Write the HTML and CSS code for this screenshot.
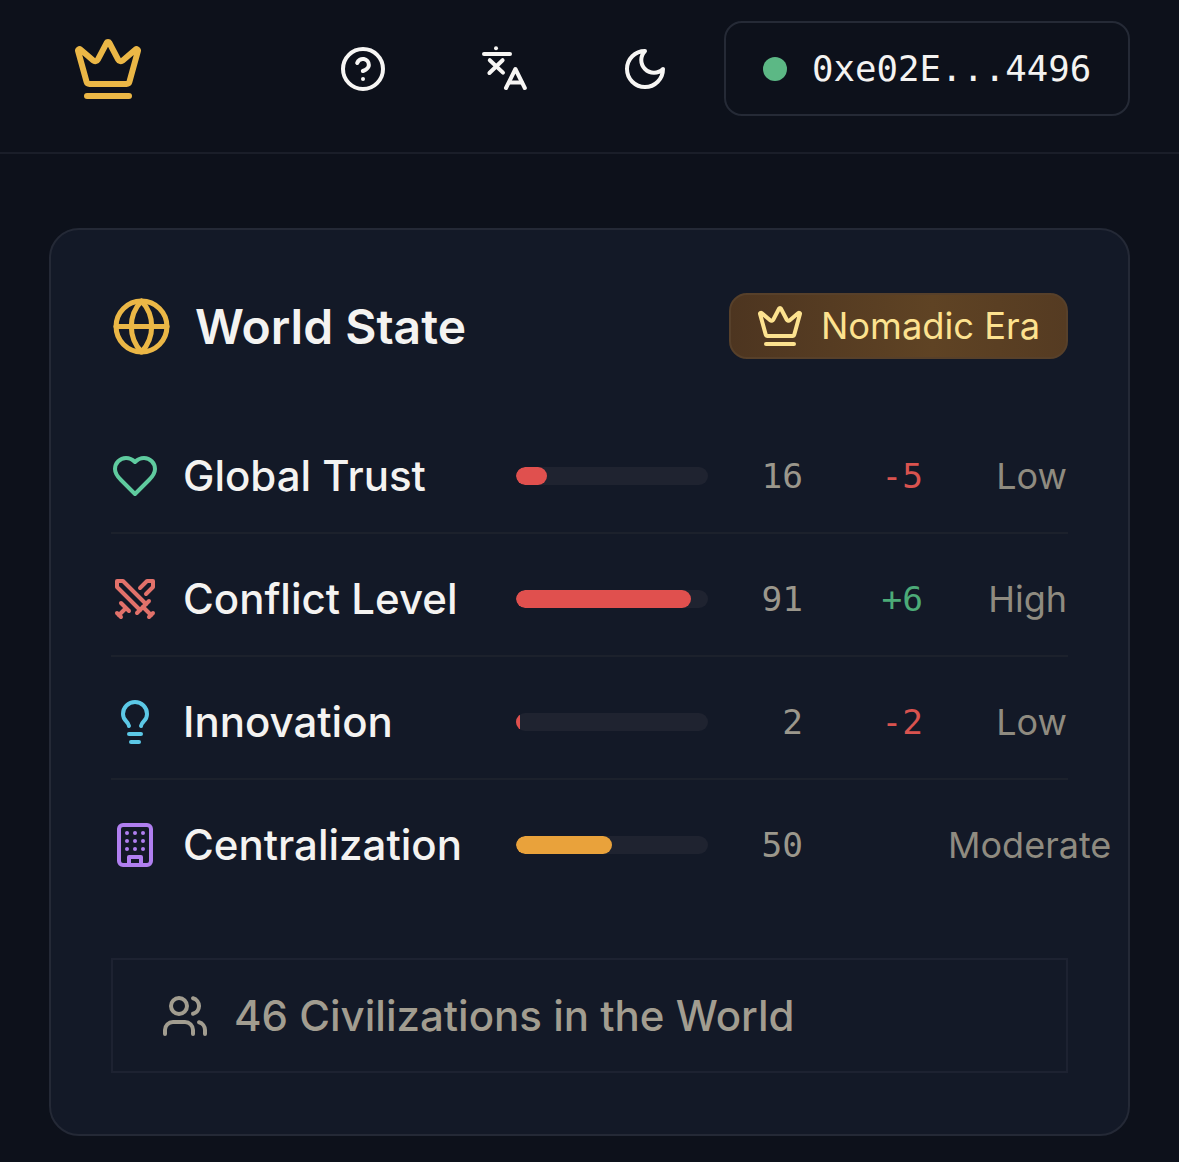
FILE: index.html
```html
<!DOCTYPE html>
<html lang="en">
<head>
    <meta charset="UTF-8">
    <meta name="viewport" content="width=device-width, initial-scale=1.0">
    <title>World State</title>
    <link rel="stylesheet" href="styles.css">
</head>
<body>
    <header class="topbar">
        <svg class="icon logo" viewBox="0 0 24 24"><path d="M11.562 3.266a.5.5 0 0 1 .876 0L15.39 8.87a1 1 0 0 0 1.516.294L21.183 5.5a.5.5 0 0 1 .798.519l-2.834 10.246a1 1 0 0 1-.956.734H5.81a1 1 0 0 1-.957-.734L2.02 6.02a.5.5 0 0 1 .798-.519l4.276 3.664a1 1 0 0 0 1.516-.294z"/><path d="M5 21h14"/></svg>
        <nav class="nav">
            <svg class="icon nav-icon" viewBox="0 0 24 24"><circle cx="12" cy="12" r="10"/><path d="M9.09 9a3 3 0 0 1 5.83 1c0 2-3 3-3 3"/><path d="M12 17h.01"/></svg>
            <svg class="icon nav-icon" viewBox="0 0 24 24"><path d="M2 4.5h13"/><path d="M8 1.6h.01"/><path d="M4.9 7.6l6.6 6.2"/><path d="M11.3 7.6l-6.6 6.4"/><path d="M13 21.5l4.7-9.5 4.7 9.5"/><path d="M14.8 18.7h6"/></svg>
            <svg class="icon nav-icon" viewBox="0 0 24 24"><path d="M12 3a6 6 0 0 0 9 9 9 9 0 1 1-9-9Z"/></svg>
            <div class="wallet">
                <span class="wallet-dot"></span>
                <span class="wallet-address">0xe02E...4496</span>
            </div>
        </nav>
    </header>

    <main class="main">
        <section class="card">
            <div class="card-head">
                <div class="card-title">
                    <svg class="icon globe" viewBox="0 0 24 24"><circle cx="12" cy="12" r="10"/><path d="M12 2a14.5 14.5 0 0 0 0 20 14.5 14.5 0 0 0 0-20"/><path d="M2 12h20"/></svg>
                    <h2>World State</h2>
                </div>
                <div class="era">
                    <svg class="icon era-icon" viewBox="0 0 24 24"><path d="M11.562 3.266a.5.5 0 0 1 .876 0L15.39 8.87a1 1 0 0 0 1.516.294L21.183 5.5a.5.5 0 0 1 .798.519l-2.834 10.246a1 1 0 0 1-.956.734H5.81a1 1 0 0 1-.957-.734L2.02 6.02a.5.5 0 0 1 .798-.519l4.276 3.664a1 1 0 0 0 1.516-.294z"/><path d="M5 21h14"/></svg>
                    <span>Nomadic Era</span>
                </div>
            </div>

            <div class="stat">
                <svg class="icon stat-icon trust" viewBox="0 0 24 24"><path d="M19 14c1.49-1.46 3-3.21 3-5.5A5.5 5.5 0 0 0 16.5 3c-1.76 0-3 .5-4.5 2-1.5-1.5-2.74-2-4.5-2A5.5 5.5 0 0 0 2 8.5c0 2.3 1.5 4.05 3 5.5l7 7Z"/></svg>
                <span class="stat-name">Global Trust</span>
                <div class="bar"><div class="bar-fill red" style="width: 16%"></div></div>
                <span class="stat-value">16</span>
                <span class="stat-delta down">-5</span>
                <span class="stat-level">Low</span>
            </div>

            <div class="stat">
                <svg class="icon stat-icon conflict" viewBox="0 0 24 24"><polyline points="14.5 17.5 3 6 3 3 6 3 17.5 14.5"/><line x1="13" y1="19" x2="19" y2="13"/><line x1="16" y1="16" x2="20" y2="20"/><line x1="19" y1="21" x2="21" y2="19"/><polyline points="14.5 6.5 18 3 21 3 21 6 17.5 9.5"/><line x1="5" y1="14" x2="9" y2="18"/><line x1="7" y1="17" x2="4" y2="20"/><line x1="3" y1="19" x2="5" y2="21"/></svg>
                <span class="stat-name">Conflict Level</span>
                <div class="bar"><div class="bar-fill red" style="width: 91%"></div></div>
                <span class="stat-value">91</span>
                <span class="stat-delta up">+6</span>
                <span class="stat-level">High</span>
            </div>

            <div class="stat">
                <svg class="icon stat-icon innovation" viewBox="0 0 24 24"><path d="M15 14c.2-1 .7-1.7 1.5-2.5 1-.9 1.5-2.2 1.5-3.5A6 6 0 0 0 6 8c0 1 .2 2.2 1.5 3.5.7.7 1.3 1.5 1.5 2.5"/><path d="M9 18h6"/><path d="M10 22h4"/></svg>
                <span class="stat-name">Innovation</span>
                <div class="bar"><div class="bar-fill red" style="width: 2%"></div></div>
                <span class="stat-value">2</span>
                <span class="stat-delta down">-2</span>
                <span class="stat-level">Low</span>
            </div>

            <div class="stat stat-last">
                <svg class="icon stat-icon central" viewBox="0 0 24 24"><rect x="4" y="2" width="16" height="20" rx="2"/><path d="M9 22v-4h6v4"/><path d="M8 6h.01"/><path d="M16 6h.01"/><path d="M12 6h.01"/><path d="M12 10h.01"/><path d="M12 14h.01"/><path d="M16 10h.01"/><path d="M16 14h.01"/><path d="M8 10h.01"/><path d="M8 14h.01"/></svg>
                <span class="stat-name">Centralization</span>
                <div class="bar"><div class="bar-fill amber" style="width: 50%"></div></div>
                <span class="stat-value">50</span>
                <span class="stat-delta"></span>
                <span class="stat-level">Moderate</span>
            </div>

            <div class="civs">
                <svg class="icon civs-icon" viewBox="0 0 24 24"><path d="M16 21v-2a4 4 0 0 0-4-4H6a4 4 0 0 0-4 4v2"/><circle cx="9" cy="7" r="4"/><path d="M22 21v-2a4 4 0 0 0-3-3.87"/><path d="M16 3.13a4 4 0 0 1 0 7.75"/></svg>
                <span>46 Civilizations in the World</span>
            </div>
        </section>
    </main>
</body>
</html>
```

FILE: styles.css
```css
* {
    box-sizing: border-box;
}

body {
    margin: 0;
    min-height: 100vh;
    background-color: #0d111b;
    color: #f4f3f1;
    font-family: Inter, "Liberation Sans", sans-serif;
}

.icon {
    fill: none;
    stroke: currentColor;
    stroke-width: 2;
    stroke-linecap: round;
    stroke-linejoin: round;
    flex-shrink: 0;
    display: block;
}

/* top bar */
.topbar {
    display: flex;
    align-items: center;
    justify-content: space-between;
    padding: 21px 49px 36px 72px;
    border-bottom: 2px solid #1a1e29;
}

.logo {
    width: 72px;
    height: 72px;
    color: #ebb746;
}

.nav {
    display: flex;
    align-items: center;
}

.nav-icon {
    width: 48px;
    height: 48px;
    margin-right: 93px;
    color: #f7f6f4;
}

.nav-icon:nth-child(3) {
    margin-right: 55px;
}

.wallet {
    display: flex;
    align-items: center;
    gap: 25px;
    width: 406px;
    height: 95px;
    padding-left: 37px;
    border: 2px solid #252a36;
    border-radius: 18px;
}

.wallet-dot {
    width: 24px;
    height: 24px;
    border-radius: 50%;
    background-color: #5cb885;
}

.wallet-address {
    font-family: "DejaVu Sans Mono", "Liberation Mono", monospace;
    font-size: 35.7px;
    color: #f4f3f1;
}

/* card */
.main {
    padding: 74px 49px 27px;
}

.card {
    padding: 63px 60px 61px;
    background-color: #131927;
    border: 2px solid #242936;
    border-radius: 30px;
}

.card-head {
    display: flex;
    align-items: center;
    justify-content: space-between;
    margin-bottom: 52px;
}

.card-title {
    display: flex;
    align-items: center;
    gap: 23px;
}

.card-title h2 {
    margin: 0;
    font-size: 48px;
    font-weight: 600;
}

.globe {
    width: 61px;
    height: 61px;
    color: #ebb746;
}

.era {
    display: flex;
    align-items: center;
    gap: 17px;
    width: 339px;
    height: 66px;
    padding-left: 25px;
    background: linear-gradient(90deg, #4d3520, #5f4324 60%, #553b22);
    border: 2px solid #57402a;
    border-radius: 18px;
    color: #fde28f;
    font-size: 36.3px;
    font-weight: 400;
}

.era-icon {
    width: 48px;
    height: 48px;
}

/* stat rows */
.stat {
    display: flex;
    align-items: center;
    padding: 41px 0 32px;
    border-bottom: 2px solid #1c212c;
}

.stat-last {
    border-bottom: none;
}

.stat-icon {
    width: 48px;
    height: 48px;
    margin-right: 24px;
}

.trust { color: #5fcb9f; }
.conflict { color: #e2716a; }
.innovation { color: #5cc8e6; }
.central { color: #b07ff0; }

.stat-name {
    width: 333px;
    font-size: 42px;
    font-weight: 500;
    line-height: 48px;
}

.bar {
    width: 192px;
    height: 18px;
    background-color: #1f2330;
    border-radius: 9px;
    overflow: hidden;
}

.bar-fill {
    height: 100%;
    border-radius: 9px;
}

.bar-fill.red { background-color: #e0504e; }
.bar-fill.amber { background-color: #e9a23b; }

.stat-value,
.stat-delta {
    font-family: "DejaVu Sans Mono", "Liberation Mono", monospace;
    font-size: 34.5px;
    text-align: right;
}

.stat-value {
    width: 95px;
    color: #9b978c;
}

.stat-delta {
    width: 120px;
}

.stat-delta.down { color: #d9534f; }
.stat-delta.up { color: #4cab78; }

.stat-level {
    width: 119px;
    margin-left: 25px;
    color: #8f8b80;
    font-size: 36px;
    text-align: right;
    white-space: nowrap;
}

/* footer box */
.civs {
    display: flex;
    align-items: center;
    gap: 25px;
    height: 115px;
    margin-top: 57px;
    padding-left: 48px;
    border: 2px solid #1d2231;
    color: #a29d90;
    font-size: 42px;
    font-weight: 500;
}

.civs-icon {
    width: 48px;
    height: 48px;
}
```
